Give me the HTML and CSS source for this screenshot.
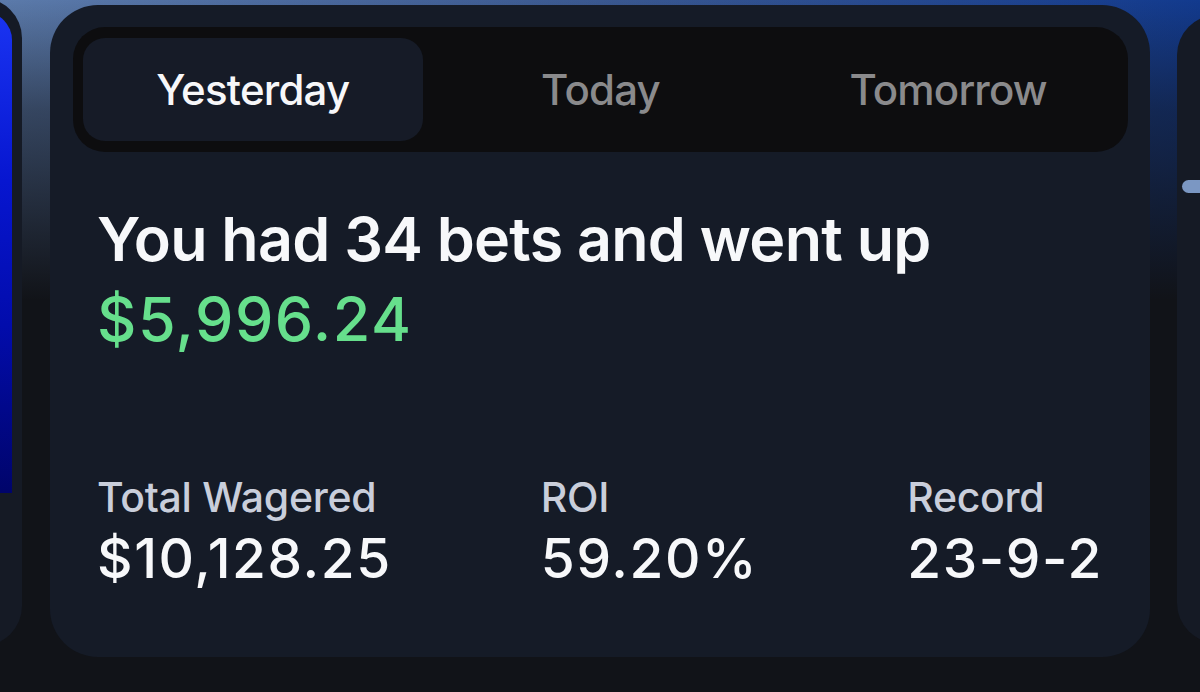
FILE: index.html
```html
<!DOCTYPE html>
<html lang="en">
<head>
<meta charset="utf-8">
<title>Bets summary</title>
<link rel="stylesheet" href="styles.css">
</head>
<body>
<div class="carousel">
  <div class="side-card side-left">
    <div class="promo"></div>
  </div>
  <section class="card">
    <nav class="tabs">
      <div class="tab active">Yesterday</div>
      <div class="tab">Today</div>
      <div class="tab">Tomorrow</div>
    </nav>
    <div class="content">
      <h1 class="headline">You had 34 bets and went up<br><span class="gain">$5,996.24</span></h1>
      <div class="stats">
        <div class="stat">
          <div class="label">Total Wagered</div>
          <div class="value">$10,128.25</div>
        </div>
        <div class="stat">
          <div class="label">ROI</div>
          <div class="value">59.20%</div>
        </div>
        <div class="stat">
          <div class="label">Record</div>
          <div class="value">23-9-2</div>
        </div>
      </div>
    </div>
  </section>
  <div class="side-card side-right">
    <div class="pill"></div>
  </div>
</div>
</body>
</html>
```
FILE: styles.css
```css
* { box-sizing: border-box; }
html, body {
  margin: 0;
  padding: 0;
}
body {
  width: 1200px;
  height: 692px;
  overflow: hidden;
  font-family: Inter, "Liberation Sans", sans-serif;
  color: #f5f6f8;
  background:
    linear-gradient(180deg, rgba(17,19,24,0) 0px, rgba(17,19,24,0.5) 110px, #111318 300px),
    linear-gradient(90deg, #5b7aaa 0%, #3a5890 50%, #123a8e 100%);
}
.carousel {
  display: flex;
  align-items: flex-start;
  gap: 28px;
  height: 692px;
  overflow: hidden;
}
.side-card {
  flex: none;
  background: #151a25;
  border-radius: 40px;
}
.side-left {
  width: 300px;
  margin-left: -278px;
  height: 648px;
  margin-top: -2px;
  padding: 14px 10px 0 0;
  display: flex;
  justify-content: flex-end;
}
.promo {
  width: 120px;
  height: 481px;
  border-radius: 0 28px 0 0;
  background: linear-gradient(180deg, #1a34f2 0%, #0716d0 35%, #020cac 65%, #00046a 100%);
}
.side-right {
  width: 300px;
  height: 628px;
  margin-top: 15px;
  margin-left: -1px;
  padding: 165px 0 0 5px;
}
.pill {
  width: 60px;
  height: 13px;
  border-radius: 7px;
  background: #7b97c3;
}
.card {
  flex: none;
  width: 1100px;
  height: 652px;
  margin-top: 5px;
  background: #151b27;
  border-radius: 48px;
  padding: 22px 22px 0 23px;
}
.tabs {
  display: grid;
  grid-template-columns: repeat(3, 1fr);
  gap: 8px;
  height: 125px;
  padding: 11px 10px;
  background: #0d0d0f;
  border-radius: 32px;
}
.tab {
  display: flex;
  align-items: center;
  justify-content: center;
  font-size: 42px;
  font-weight: 500;
  letter-spacing: -0.8px;
  color: #8a8a8c;
  border-radius: 22px;
}
.tab.active {
  background: #161b27;
  color: #f7f7f9;
}
.content {
  padding: 0 25px 0 24px;
}
.headline {
  margin: 47px 0 0;
  font-size: 61px;
  line-height: 80px;
  font-weight: 600;
  letter-spacing: -0.75px;
  color: #f7f8fa;
}
.gain {
  font-weight: 500;
  letter-spacing: 1.5px;
  color: #66df8c;
}
.stats {
  display: flex;
  justify-content: space-between;
  margin-top: 113px;
}
.label {
  font-size: 41px;
  line-height: 50px;
  font-weight: 500;
  letter-spacing: -0.3px;
  color: #c9cedb;
}
.value {
  margin-top: 4px;
  font-size: 55px;
  line-height: 64px;
  font-weight: 500;
  letter-spacing: 1.6px;
  color: #f7f8fa;
}
```
